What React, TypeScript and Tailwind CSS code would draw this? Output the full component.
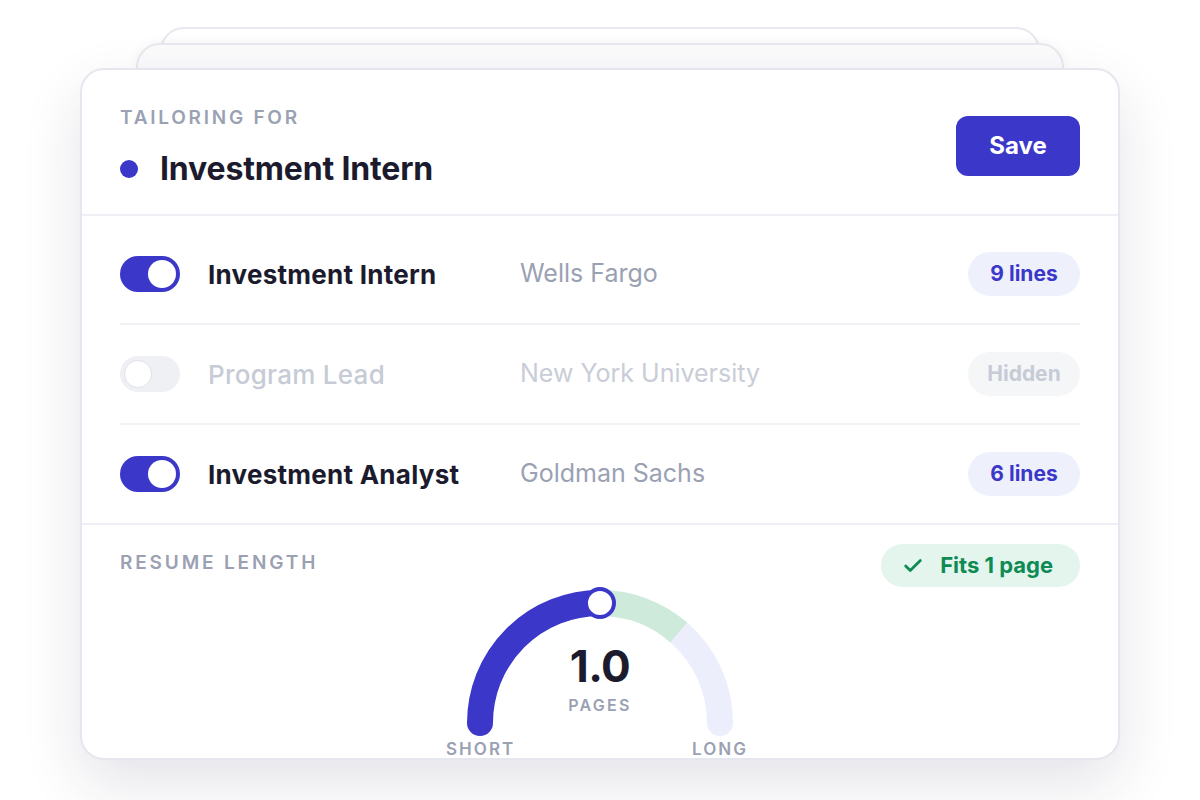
import { Check } from "lucide-react";

type Row = { on: boolean; title: string; org: string; badge: string };

const rows: Row[] = [
  { on: true, title: "Investment Intern", org: "Wells Fargo", badge: "9 lines" },
  { on: false, title: "Program Lead", org: "New York University", badge: "Hidden" },
  { on: true, title: "Investment Analyst", org: "Goldman Sachs", badge: "6 lines" },
];

function Toggle({ on }: { on: boolean }) {
  if (on) {
    return (
      <div className="w-[60px] h-[36px] rounded-full bg-[#3b37c9] flex items-center justify-end pr-[4px] shrink-0">
        <div className="w-[28px] h-[28px] rounded-full bg-white" />
      </div>
    );
  }
  return (
    <div className="w-[60px] h-[36px] rounded-full bg-[#eef0f4] flex items-center pl-[4px] shrink-0">
      <div className="w-[28px] h-[28px] rounded-full bg-white border border-[#dfe2e8]" />
    </div>
  );
}

function Gauge() {
  return (
    <div className="relative w-[300px] h-[172px] mx-auto">
      <svg className="absolute left-0 top-0" width="300" height="172" viewBox="0 0 300 172">
        <path d="M228.7 45.4 A120 120 0 0 1 270 136" fill="none" stroke="#eceefc" strokeWidth="26" strokeLinecap="round" />
        <path d="M150 16 A120 120 0 0 1 228.7 45.4" fill="none" stroke="#cdeadb" strokeWidth="26" />
        <path d="M30 136 A120 120 0 0 1 150 16" fill="none" stroke="#3b37c9" strokeWidth="26" strokeLinecap="round" />
        <circle cx="150" cy="16" r="14" fill="#ffffff" stroke="#3b37c9" strokeWidth="4" />
      </svg>
      <div className="relative flex flex-col items-center pt-[55px]">
        <div className="text-[44px] leading-[48px] font-bold text-[#1c1b2e] tracking-[-0.01em]">1.0</div>
        <div className="mt-[5px] text-[16px] leading-[20px] font-semibold tracking-[0.14em] text-[#9aa1b3]">PAGES</div>
      </div>
      <div className="relative flex justify-between mt-[24px] -mx-[4px]">
        <div className="w-[68px] text-center text-[17px] leading-[20px] font-semibold tracking-[0.12em] text-[#9aa1b3]">SHORT</div>
        <div className="w-[68px] text-center text-[17px] leading-[20px] font-semibold tracking-[0.12em] text-[#9aa1b3]">LONG</div>
      </div>
    </div>
  );
}

export default function App() {
  return (
    <div className="relative w-[1200px] h-[800px] bg-white overflow-hidden font-['Inter',sans-serif] pt-[68px] px-[80px]">
      {/* stacked cards behind */}
      <div className="absolute left-[160px] right-[160px] top-[27px] h-[120px] rounded-[24px] border-2 border-[#e8e9ef] bg-white" />
      <div className="absolute left-[136px] right-[136px] top-[43px] h-[120px] rounded-[24px] border-2 border-[#e8e9ef] bg-[#fbfbfc] shadow-[0_-2px_10px_rgba(30,30,60,0.04)]" />

      <div className="relative h-[692px] rounded-[24px] border-2 border-[#e6e7ee] bg-white overflow-hidden shadow-[0_24px_60px_rgba(30,30,70,0.12)]">
        {/* header */}
        <div className="flex items-center justify-between px-[38px] pt-[38px] pb-[27px] border-b-2 border-[#eff0f5]">
          <div className="flex flex-col">
            <div className="text-[19px] leading-[20px] font-semibold tracking-[0.145em] text-[#9aa1b3]">TAILORING FOR</div>
            <div className="flex items-center mt-[23px] h-[36px]">
              <div className="w-[18px] h-[18px] rounded-full bg-[#3b37c9]" />
              <div className="ml-[22px] text-[32px] leading-[36px] font-bold text-[#1c1b2e] tracking-[-0.005em]">Investment Intern</div>
            </div>
          </div>
          <button className="w-[124px] h-[60px] rounded-[12px] bg-[#3b37c9] text-white text-[24px] font-bold -mt-[4px]">
            Save
          </button>
        </div>

        {/* rows */}
        <div className="px-[38px] pt-[9px]">
          {rows.map((r, i) => (
            <div
              key={r.title}
              className={
                "flex items-center " + (i < rows.length - 1 ? "h-[100px] border-b-2 border-[#f1f2f6]" : "h-[98px]")
              }
            >
              <Toggle on={r.on} />
              <div
                className={
                  "ml-[28px] w-[312px] text-[26px] tracking-[0.01em] " +
                  (r.on ? "font-bold text-[#1c1b2e]" : "font-medium text-[#c6cbd6]")
                }
              >
                {r.title}
              </div>
              <div className={"flex-1 text-[25px] " + (r.on ? "text-[#9aa1b3]" : "text-[#c9cdd7]")}>{r.org}</div>
              <div
                className={
                  "w-[112px] h-[44px] rounded-full flex items-center justify-center text-[21px] font-bold " +
                  (r.on ? "bg-[#eef0fc] text-[#3b37c9]" : "bg-[#f5f6f8] text-[#c6cbd6]")
                }
              >
                {r.badge}
              </div>
            </div>
          ))}
        </div>

        {/* resume length */}
        <div className="border-t-2 border-[#eff0f5] px-[38px] pt-[19px]">
          <div className="flex items-start justify-between">
            <div className="mt-[9px] text-[19px] leading-[20px] font-semibold tracking-[0.15em] text-[#9aa1b3]">RESUME LENGTH</div>
            <div className="h-[43px] rounded-full bg-[#e3f5ec] flex items-center pl-[21px] pr-[27px] gap-[16px] text-[22px] font-bold text-[#0e8a55]">
              <Check size={22} strokeWidth={3} />
              <span>Fits 1 page</span>
            </div>
          </div>
          <Gauge />
        </div>
      </div>
    </div>
  );
}
